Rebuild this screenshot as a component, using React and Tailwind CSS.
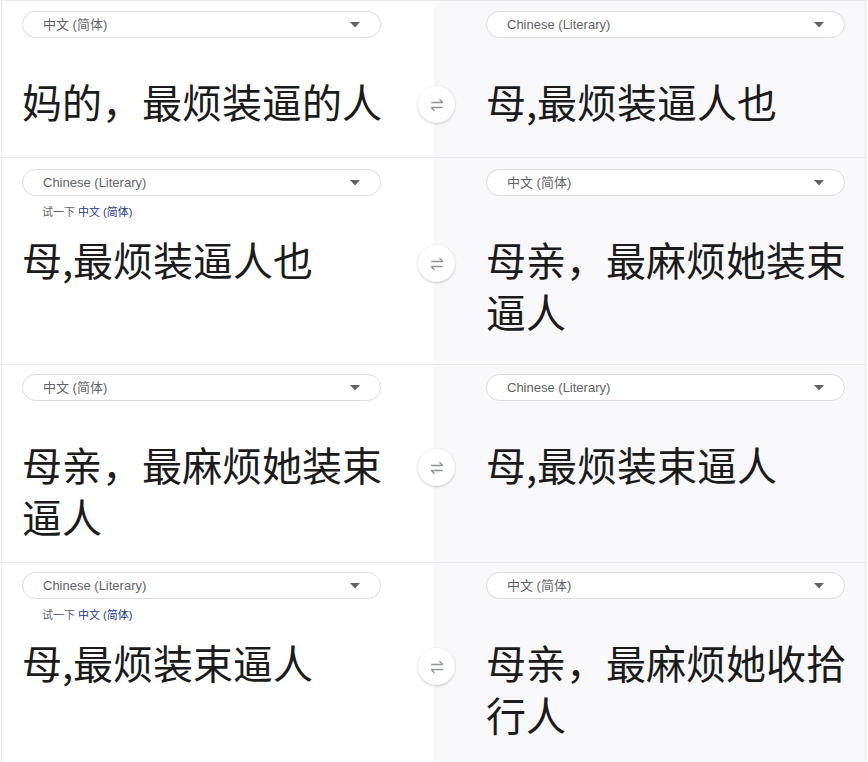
import React from 'react';

const rows = [
  { h: 'h-[157px]', pt: 'pt-[10px]', btn: 'top-[85px]', from: '中文 (简体)', to: 'Chinese (Literary)', src: '妈的，最烦装逼的人', out: '母,最烦装逼人也', hint: false },
  { h: 'h-[207px]', pt: 'pt-[11px]', btn: 'top-[87px]', from: 'Chinese (Literary)', to: '中文 (简体)', src: '母,最烦装逼人也', out: '母亲，最麻烦她装束逼人', hint: true },
  { h: 'h-[198px]', pt: 'pt-[9px]', btn: 'top-[84px]', from: '中文 (简体)', to: 'Chinese (Literary)', src: '母亲，最麻烦她装束逼人', out: '母,最烦装束逼人', hint: false },
  { h: 'h-[200px]', pt: 'pt-[9px]', btn: 'top-[85px]', from: 'Chinese (Literary)', to: '中文 (简体)', src: '母,最烦装束逼人', out: '母亲，最麻烦她收拾行人', hint: true },
];

const Caret = () => (
  <svg width="10" height="6" viewBox="0 0 10 6" className="shrink-0">
    <path d="M0 0h10L5 5.5z" fill="#5f6368" />
  </svg>
);

const SwapIcon = () => (
  <svg width="20" height="20" viewBox="0 0 24 24" fill="none" stroke="#8f949a" strokeWidth="1.6">
    <path d="M5 9h14M15 5l4 4" />
    <path d="M19 15H5M9 19l-4-4" />
  </svg>
);

const LangPill = ({ label }) => (
  <div className="flex items-center justify-between w-[359px] h-[27px] rounded-full border border-[#dadce0] bg-white pl-[20px] pr-[20px]">
    <span className="text-[13px] text-[#5f6368] leading-none font-['Liberation_Sans','Noto_Sans_CJK_SC',sans-serif]">{label}</span>
    <Caret />
  </div>
);

const BigText = ({ children }) => (
  <div className="w-[362px] text-[40px] leading-[52px] text-[#1b1b1b]">{children}</div>
);

const Row = ({ row }) => (
  <div className={`relative flex ${row.h} border-t border-[#e8eaed] overflow-hidden`}>
    <div className={`w-[433px] ml-[1px] border-l border-[#e8eaed] bg-white pl-[20px] ${row.pt}`}>
      <LangPill label={row.from} />
      <div className="h-[37px]">
        {row.hint && (
          <div className="pt-[9px] pl-[20px] text-[11px] leading-[14px] text-[#5f6368] font-['Liberation_Sans','Noto_Sans_CJK_SC',sans-serif]">
            试一下 <span className="text-[#1a3a8f]">中文 (简体)</span>
          </div>
        )}
      </div>
      <BigText>{row.src}</BigText>
    </div>
    <div className={`w-[432px] border-r border-[#e8eaed] bg-[#f8f8fa] pl-[52px] ${row.pt}`}>
      <LangPill label={row.to} />
      <div className="h-[37px]" />
      <BigText>{row.out}</BigText>
    </div>
    <div className={`absolute left-[418px] ${row.btn} w-[37px] h-[37px] rounded-full bg-white shadow-[0_1px_3px_rgba(0,0,0,0.2)] flex items-center justify-center`}>
      <SwapIcon />
    </div>
  </div>
);

export default function App() {
  return (
    <div className="w-[868px] h-[762px] overflow-hidden bg-white font-['Noto_Sans_CJK_SC',sans-serif]">
      {rows.map((row, i) => (
        <Row key={i} row={row} />
      ))}
    </div>
  );
}
